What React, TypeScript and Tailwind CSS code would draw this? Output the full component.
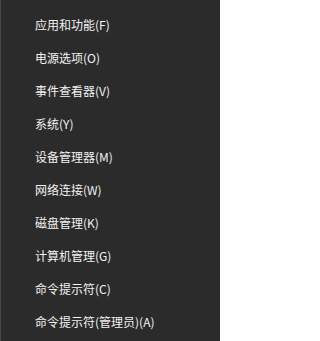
import React from 'react';

const items = [
  '应用和功能(F)',
  '电源选项(O)',
  '事件查看器(V)',
  '系统(Y)',
  '设备管理器(M)',
  '网络连接(W)',
  '磁盘管理(K)',
  '计算机管理(G)',
  '命令提示符(C)',
  '命令提示符(管理员)(A)',
];

const App: React.FC = () => {
  return (
    <div
      className="w-[220px] h-[341px] bg-[#2b2b2b] border-l border-[#474747] pt-[8px] overflow-hidden"
      style={{ fontFamily: '"Microsoft YaHei", "Noto Sans CJK SC", "Liberation Sans", sans-serif' }}
    >
      {items.map((label) => (
        <div key={label} className="h-[33px] flex items-center pl-[34px] text-[12px] text-[#f2f2f2]">
          {label}
        </div>
      ))}
    </div>
  );
};

export default App;
